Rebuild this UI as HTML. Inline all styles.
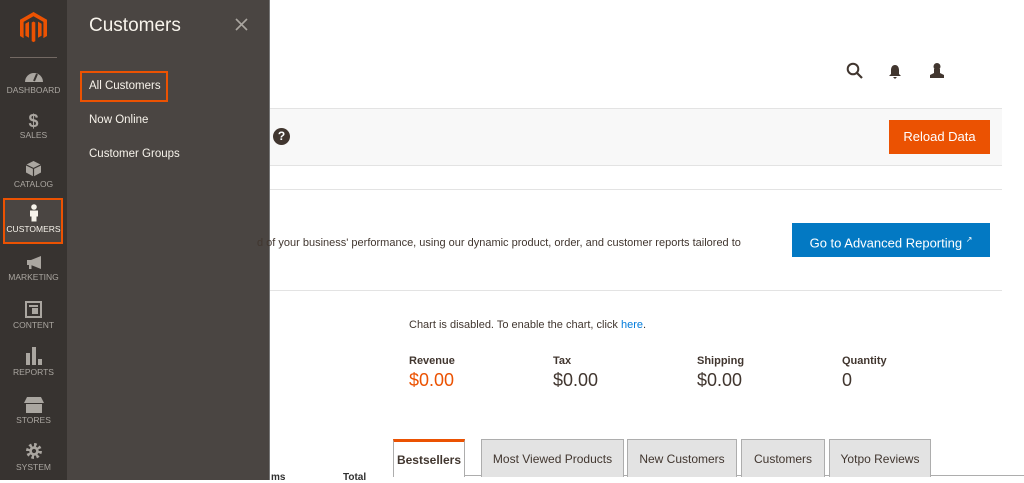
<!DOCTYPE html>
<html><head><style>
*{margin:0;padding:0;box-sizing:border-box}
body{width:1024px;height:480px;overflow:hidden;background:#fff;font-family:"Liberation Sans",sans-serif;position:relative;color:#303030}
.abs{position:absolute}
.nav{left:0;top:0;width:67px;height:480px;background:#373330}
.sub{left:67px;top:0;width:203px;height:480px;background:#4a4542;border-right:1px solid #777}
.ni{position:absolute;left:0;width:67px;text-align:center;color:#aaa6a0;font-size:8.5px}
.ni svg{display:block;margin:0 auto 2px}
.si{position:absolute;left:89px;color:#f7f3eb;font-size:11.5px}
.tab{position:absolute;top:439px;height:38px;background:#e3e3e3;border:1px solid #adadad;border-bottom:none;font-size:12px;color:#41362f;text-align:center;line-height:38px}
.lbl{position:absolute;top:355px;font-size:11px;font-weight:bold;color:#41362f}
.val{position:absolute;top:370px;font-size:18px;color:#41362f}
</style></head><body>
<div class="abs nav"></div>
<svg class="abs" style="left:20px;top:12px" width="27" height="32" viewBox="0 0 27 32"><path d="M13.5 0 27 7.8v16.2l-3.6 2.1V9.9L13.5 4.2 3.6 9.9v16.2L0 24V7.8z M11.7 10.5l1.8-1 1.8 1v18.6l-1.8 1-1.8-1z M5.4 11.7l3.6-2.1v16.2l-3.6-2z M18 9.6l3.6 2.1v12.1l-3.6 2z" fill="#eb5202"/></svg>
<div class="abs" style="left:10px;top:57px;width:47px;height:1px;background:#736963"></div>
<div class="ni" style="top:68px"><svg width="20" height="15"><path d="M1 14A9 9 0 0 1 19 14Z" fill="#aaa6a0"/><path d="M10 13 13 6" stroke="#373330" stroke-width="2"/></svg>DASHBOARD</div>
<div class="ni" style="top:112px"><div style="font-size:18px;font-weight:bold;line-height:18px">$</div>SALES</div>
<div class="ni" style="top:160px"><svg width="17" height="17"><path d="M8.5 1 16 4.8V12.5L8.5 16.5 1 12.5V4.8Z" fill="#aaa6a0"/><path d="M1 4.8 8.5 8.5 16 4.8M8.5 8.5v8" stroke="#373330" stroke-width="1.2" fill="none"/></svg>CATALOG</div>
<div class="abs" style="left:3px;top:198px;width:60px;height:46px;border:2px solid #eb5202;background:#4a4542"></div>
<div class="ni" style="top:204px;color:#f7f3eb"><svg width="12" height="18"><circle cx="6" cy="3" r="2.8" fill="#f7f3eb"/><path d="M2 6.5h8v6H8.5v5h-5v-5H2z" fill="#f7f3eb"/></svg>CUSTOMERS</div>
<div class="ni" style="top:255px"><svg width="19" height="15"><path d="M3 5h4l10-4v13L7 10H3z M5 10h2.5v4H5z" fill="#aaa6a0"/></svg>MARKETING</div>
<div class="ni" style="top:301px"><svg width="17" height="17"><rect x="1" y="1" width="15" height="15" fill="none" stroke="#aaa6a0" stroke-width="2"/><rect x="4" y="4" width="9" height="2" fill="#aaa6a0"/><rect x="7" y="7" width="6" height="6" fill="#aaa6a0"/></svg>CONTENT</div>
<div class="ni" style="top:347px"><svg width="17" height="18"><rect x="1" y="6" width="4" height="12" fill="#aaa6a0"/><rect x="7" y="0" width="4" height="18" fill="#aaa6a0"/><rect x="13" y="12" width="4" height="6" fill="#aaa6a0"/></svg>REPORTS</div>
<div class="ni" style="top:396px"><svg width="20" height="17"><path d="M3 1h14l3 6H0z M2 8h16v9H2z" fill="#aaa6a0"/></svg>STORES</div>
<div class="ni" style="top:442px"><svg width="18" height="18" viewBox="0 0 17 17"><circle cx="8.5" cy="8.5" r="5.5" fill="none" stroke="#aaa6a0" stroke-width="4" stroke-dasharray="2.2 2.1"/><circle cx="8.5" cy="8.5" r="4.5" fill="#aaa6a0"/><circle cx="8.5" cy="8.5" r="2" fill="#373330"/></svg>SYSTEM</div>

<div class="abs sub"></div>
<div class="abs" style="left:89px;top:15px;font-size:19px;color:#f7f3eb">Customers</div>
<svg class="abs" style="left:235px;top:18px" width="13" height="13"><path d="M1 1 12 12M12 1 1 12" stroke="#aaa6a0" stroke-width="1.6"/></svg>
<div class="abs" style="left:80px;top:71px;width:88px;height:31px;border:2px solid #eb5202"></div>
<div class="si" style="top:80px">All Customers</div>
<div class="si" style="top:114px">Now Online</div>
<div class="si" style="top:148px">Customer Groups</div>

<svg class="abs" style="left:846px;top:62px" width="18" height="18"><circle cx="7" cy="7" r="5.3" fill="none" stroke="#41362f" stroke-width="2"/><path d="M11 11 16 16" stroke="#41362f" stroke-width="2.2"/></svg>
<svg class="abs" style="left:888px;top:64px" width="14" height="16"><path d="M7 1C4 1 3 4 3 6v4L1 12h12l-2-2V6c0-2-1-5-4-5z M5 13h4l-2 2z" fill="#41362f"/></svg>
<svg class="abs" style="left:929px;top:62px" width="16" height="16"><circle cx="8" cy="4.5" r="3.5" fill="#41362f"/><path d="M5 7h6v4l4 2v3H1v-3l4-2z" fill="#41362f"/></svg>

<div class="abs" style="left:270px;top:108px;width:732px;height:58px;background:#f8f8f8;border-top:1px solid #e3e3e3;border-bottom:1px solid #e3e3e3"></div>
<div class="abs" style="left:273px;top:128px;width:17px;height:17px;border-radius:50%;background:#41362f;color:#fff;font-size:12px;font-weight:bold;text-align:center;line-height:17px">?</div>
<div class="abs" style="left:889px;top:120px;width:101px;height:34px;background:#eb5202;color:#fff;font-size:13px;text-align:center;line-height:34px">Reload Data</div>
<div class="abs" style="left:270px;top:189px;width:732px;height:1px;background:#e3e3e3"></div>
<div class="abs" style="left:257px;top:237px;font-size:11px;color:#41362f">d of your business' performance, using our dynamic product, order, and customer reports tailored to</div>
<div class="abs" style="left:792px;top:223px;width:198px;height:34px;background:#0379c3;color:#fff;font-size:13px;text-align:center;line-height:34px">Go to Advanced Reporting <sup style="font-size:8px">↗</sup></div>
<div class="abs" style="left:270px;top:290px;width:732px;height:1px;background:#e3e3e3"></div>
<div class="abs" style="left:409px;top:319px;font-size:11px;color:#41362f">Chart is disabled. To enable the chart, click <span style="color:#007bdb">here</span>.</div>
<div class="lbl" style="left:409px">Revenue</div><div class="val" style="left:409px;color:#eb5202">$0.00</div>
<div class="lbl" style="left:553px">Tax</div><div class="val" style="left:553px">$0.00</div>
<div class="lbl" style="left:697px">Shipping</div><div class="val" style="left:697px">$0.00</div>
<div class="lbl" style="left:842px">Quantity</div><div class="val" style="left:842px">0</div>
<div class="abs" style="left:394px;top:475px;width:630px;height:1px;background:#adadad"></div>
<div class="tab" style="left:393px;width:72px;background:#fff;border-color:#adadad;border-top:3px solid #eb5202;font-weight:bold;line-height:36px">Bestsellers</div>
<div class="tab" style="left:481px;width:143px">Most Viewed Products</div>
<div class="tab" style="left:627px;width:110px">New Customers</div>
<div class="tab" style="left:741px;width:84px">Customers</div>
<div class="tab" style="left:829px;width:102px">Yotpo Reviews</div>
<div class="abs" style="left:271px;top:472px;font-size:10px;font-weight:bold">ms</div>
<div class="abs" style="left:343px;top:472px;font-size:10px;font-weight:bold">Total</div>
</body></html>
